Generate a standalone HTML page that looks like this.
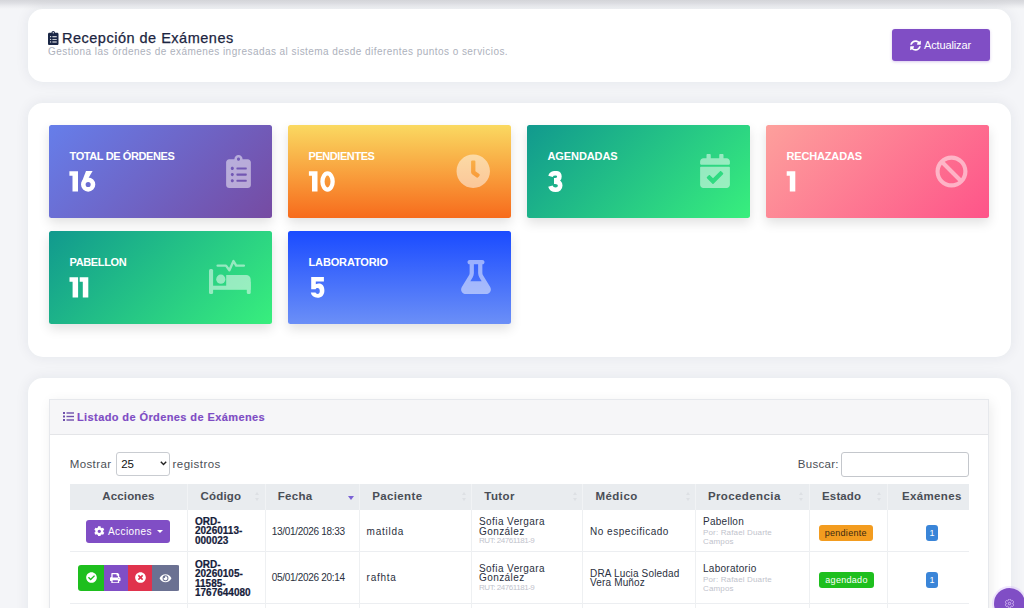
<!DOCTYPE html>
<html><head><meta charset="utf-8">
<style>
*{box-sizing:border-box;margin:0;padding:0}
html,body{width:1024px;height:608px;overflow:hidden}
body{background:#f4f5f8;font-family:"Liberation Sans",sans-serif;position:relative;color:#1f2a44}
.abs{position:absolute}
.topstrip{left:0;top:0;width:1024px;height:10px;background:linear-gradient(#d5d6da 0,#dedfe3 3px,#ebecef 6px,#f4f5f7 9px)}
.panel{position:absolute;background:#fff;border-radius:15px;box-shadow:0 0 14px rgba(30,40,70,.075)}
.t{position:absolute;white-space:nowrap;line-height:1}
.card{position:absolute;width:222.7px;height:93px;border-radius:2.5px;box-shadow:0 5px 12px rgba(0,0,0,.12)}
.card .lbl{position:absolute;left:20.5px;top:26px;font-size:11px;line-height:1;font-weight:700;color:#fff;letter-spacing:-.39px;white-space:nowrap}
.card .num{position:absolute;left:20px;top:43.5px;font-size:28px;line-height:1;font-weight:700;color:#fff;transform:scaleX(.86);transform-origin:left;letter-spacing:-.3px;-webkit-text-stroke:.6px #fff}
.card svg{position:absolute;opacity:.5}
.card svg.numsvg{opacity:1}
.th{position:absolute;top:491px;font-size:11.5px;line-height:1;font-weight:700;color:#4a4e56;white-space:nowrap}
.cell{position:absolute;font-size:10px;line-height:1;color:#2a3040;white-space:nowrap}
.code{position:absolute;font-size:10px;line-height:9.6px;font-weight:700;color:#15203a;white-space:nowrap;-webkit-text-stroke:.2px #15203a}
.sm{font-size:8px;color:#bfc3cc}
.sort{position:absolute;top:492px;width:4px;height:9px}
.sort:before,.sort:after{content:"";position:absolute;left:0;border-left:2px solid transparent;border-right:2px solid transparent}
.sort:before{top:0;border-bottom:3px solid #dde0e4}
.sort:after{bottom:0;border-top:3px solid #dde0e4}
.badge{position:absolute;height:16px;border-radius:3px;font-size:9px;line-height:16px;text-align:center;white-space:nowrap}
</style></head><body>
<div class="abs topstrip"></div>

<!-- panel 1 -->
<div class="panel" style="left:28px;top:9px;width:983px;height:73px"></div>
<svg class="abs" style="left:48px;top:30.5px" width="10.5" height="14" viewBox="0 0 384 512"><path fill="#1b2746" d="M336 64h-80c0-35.3-28.7-64-64-64s-64 28.7-64 64H48C21.5 64 0 85.5 0 112v352c0 26.5 21.5 48 48 48h288c26.5 0 48-21.5 48-48V112c0-26.5-21.5-48-48-48zM96 424c-13.3 0-24-10.7-24-24s10.7-24 24-24 24 10.7 24 24-10.7 24-24 24zm0-96c-13.3 0-24-10.7-24-24s10.7-24 24-24 24 10.7 24 24-10.7 24-24 24zm0-96c-13.3 0-24-10.7-24-24s10.7-24 24-24 24 10.7 24 24-10.7 24-24 24zm96-192c13.3 0 24 10.7 24 24s-10.7 24-24 24-24-10.7-24-24 10.7-24 24-24zm128 368c0 4.4-3.6 8-8 8H168c-4.4 0-8-3.6-8-8v-16c0-4.4 3.6-8 8-8h144c4.4 0 8 3.6 8 8v16zm0-96c0 4.4-3.6 8-8 8H168c-4.4 0-8-3.6-8-8v-16c0-4.4 3.6-8 8-8h144c4.4 0 8 3.6 8 8v16zm0-96c0 4.4-3.6 8-8 8H168c-4.4 0-8-3.6-8-8v-16c0-4.4 3.6-8 8-8h144c4.4 0 8 3.6 8 8v16z"/></svg>
<div class="t" style="left:62px;top:30.6px;font-size:14.5px;color:#1c2541;letter-spacing:.5px;-webkit-text-stroke:.25px #1c2541">Recepción de Exámenes</div>
<div class="t" style="left:48px;top:47.3px;font-size:10px;color:#adb1bc;letter-spacing:.45px">Gestiona las órdenes de exámenes ingresadas al sistema desde diferentes puntos o servicios.</div>
<div class="abs" style="left:892px;top:29px;width:98px;height:31.5px;background:#804ec5;border-radius:3px;box-shadow:0 1px 3px rgba(125,77,195,.3)"></div>
<svg class="abs" style="left:910px;top:39.5px" width="11" height="11" viewBox="0 0 512 512"><path fill="#fff" d="M370.7 133.3C339.5 104 298.9 88 255.8 88c-77.5.1-144.3 53.2-162.8 126.9-1.3 5.4-6.1 9.2-11.7 9.2H24.1c-7.5 0-13.2-6.8-11.8-14.2C33.9 94.9 134.8 8 256 8c66.4 0 126.8 26.1 171.3 68.7L463 41c15.1-15.1 41-4.4 41 17v134c0 13.3-10.7 24-24 24H346c-21.4 0-32.1-25.9-17-41l41.7-41.7zM32 296h134c21.4 0 32.1 25.9 17 41l-41.8 41.8c31.3 29.3 71.8 45.3 114.9 45.3 77.4-.1 144.3-53.1 162.8-126.8 1.3-5.4 6.1-9.2 11.7-9.2h57.3c7.5 0 13.2 6.8 11.8 14.2C478.1 417.1 377.2 504 256 504c-66.4 0-126.8-26.1-171.3-68.7L49 471c-15.1 15.1-41 4.4-41-17V320c0-13.3 10.7-24 24-24z"/></svg>
<div class="t" style="left:924px;top:40px;font-size:11px;color:#fff;letter-spacing:-.13px">Actualizar</div>

<!-- panel 2 -->
<div class="panel" style="left:28px;top:103px;width:983px;height:254px"></div>

<div class="card" style="left:49px;top:125px;background:linear-gradient(135deg,#667eea 0%,#764ba2 100%)">
  <div class="lbl">TOTAL DE ÓRDENES</div><svg class="numsvg" style="left:0;top:46.2px" width="60" height="22" viewBox="0 0 60 22"><g fill="#fff"><path transform="translate(20.4,0.2)" d="M0 0.1H8.6V20.3H3.1V4.6H0Z"/><g transform="translate(32,0)"><circle cx="7.15" cy="13.55" r="4.85" fill="none" stroke="#fff" stroke-width="4.6"/><path d="M5.0 0H11.6L6.9 7.9L0.6 11.6Z"/></g></g></svg>
  <svg style="left:177px;top:30px" width="25" height="33" viewBox="0 0 384 512"><path fill="#fff" d="M336 64h-80c0-35.3-28.7-64-64-64s-64 28.7-64 64H48C21.5 64 0 85.5 0 112v352c0 26.5 21.5 48 48 48h288c26.5 0 48-21.5 48-48V112c0-26.5-21.5-48-48-48zM96 424c-13.3 0-24-10.7-24-24s10.7-24 24-24 24 10.7 24 24-10.7 24-24 24zm0-96c-13.3 0-24-10.7-24-24s10.7-24 24-24 24 10.7 24 24-10.7 24-24 24zm0-96c-13.3 0-24-10.7-24-24s10.7-24 24-24 24 10.7 24 24-10.7 24-24 24zm96-192c13.3 0 24 10.7 24 24s-10.7 24-24 24-24-10.7-24-24 10.7-24 24-24zm128 368c0 4.4-3.6 8-8 8H168c-4.4 0-8-3.6-8-8v-16c0-4.4 3.6-8 8-8h144c4.4 0 8 3.6 8 8v16zm0-96c0 4.4-3.6 8-8 8H168c-4.4 0-8-3.6-8-8v-16c0-4.4 3.6-8 8-8h144c4.4 0 8 3.6 8 8v16zm0-96c0 4.4-3.6 8-8 8H168c-4.4 0-8-3.6-8-8v-16c0-4.4 3.6-8 8-8h144c4.4 0 8 3.6 8 8v16z"/></svg>
</div>
<div class="card" style="left:288px;top:125px;background:linear-gradient(to bottom,#fad961 0%,#f76b1c 100%)">
  <div class="lbl" style="letter-spacing:-0.43px">PENDIENTES</div><svg class="numsvg" style="left:0;top:46.2px" width="60" height="22" viewBox="0 0 60 22"><g fill="#fff"><path transform="translate(20.9,0.2)" d="M0 0.1H8.6V20.3H3.1V4.6H0Z"/><g transform="translate(32.3,0.3)"><ellipse cx="7.25" cy="10.2" rx="5.1" ry="8.05" fill="none" stroke="#fff" stroke-width="4.3"/></g></g></svg>
  <svg style="left:168.3px;top:29.3px" width="34.5" height="34.5" viewBox="0 0 512 512"><path fill="#fff" d="M256,8C119,8,8,119,8,256S119,504,256,504,504,393,504,256,393,8,256,8Zm92.49,313h0l-20,25a16,16,0,0,1-22.49,2.5h0l-67-49.72a40,40,0,0,1-15-31.23V112a16,16,0,0,1,16-16h32a16,16,0,0,1,16,16V256l58,42.5A16,16,0,0,1,348.49,321Z"/></svg>
</div>
<div class="card" style="left:527px;top:125px;background:linear-gradient(135deg,#11998e 0%,#38ef7d 100%)">
  <div class="lbl" style="letter-spacing:-0.1px">AGENDADAS</div><svg class="numsvg" style="left:0;top:45.9px" width="60" height="22" viewBox="0 0 60 22"><g fill="#fff"><g transform="translate(21.6,0)"><path d="M1.9 5.3C2.6 2.9 4.5 2.2 7.0 2.2C9.6 2.2 10.8 3.6 10.8 5.6C10.8 8.0 9.2 9.4 6.3 9.4H5.4M5.4 10.7H6.6C9.7 10.7 11.6 12.0 11.6 14.6C11.6 17.3 9.6 18.8 7.0 18.8C4.2 18.8 2.5 17.6 1.8 15.2" fill="none" stroke="#fff" stroke-width="4.6"/></g></g></svg>
  <svg style="left:173px;top:29px" width="30" height="34" viewBox="0 0 448 512"><path fill="#fff" d="M436 160H12c-6.627 0-12-5.373-12-12v-36c0-26.51 21.49-48 48-48h48V12c0-6.627 5.373-12 12-12h40c6.627 0 12 5.373 12 12v52h128V12c0-6.627 5.373-12 12-12h40c6.627 0 12 5.373 12 12v52h48c26.51 0 48 21.490 48 48v36c0 6.627-5.373 12-12 12zM12 192h424c6.627 0 12 5.373 12 12v260c0 26.51-21.49 48-48 48H48c-26.51 0-48-21.49-48-48V204c0-6.627 5.373-12 12-12zm333.296 95.947l-28.169-28.398c-4.667-4.705-12.265-4.736-16.970-.068L194.12 364.665l-45.98-46.352c-4.667-4.705-12.266-4.736-16.971-.068l-28.397 28.17c-4.705 4.667-4.736 12.265-.068 16.97l82.601 83.269c4.667 4.705 12.265 4.736 16.97.068l142.953-141.805c4.705-4.667 4.736-12.265.068-16.97z"/></svg>
</div>
<div class="card" style="left:766px;top:125px;background:linear-gradient(135deg,#fda09c 0%,#fe5489 100%)">
  <div class="lbl" style="letter-spacing:-0.16px">RECHAZADAS</div><svg class="numsvg" style="left:0;top:46.2px" width="60" height="22" viewBox="0 0 60 22"><g fill="#fff"><path transform="translate(20.7,0.2)" d="M0 0.1H8.6V20.3H3.1V4.6H0Z"/></g></svg>
  <svg style="left:169px;top:30px" width="33" height="33" viewBox="0 0 512 512"><path fill="#fff" d="M256 8C119.034 8 8 119.033 8 256s111.034 248 248 248 248-111.034 248-248S392.967 8 256 8zm130.108 117.892c65.448 65.448 70 165.481 20.677 235.637L150.47 105.216c70.204-49.356 170.226-44.735 235.638 20.676zM125.892 386.108c-65.448-65.448-70-165.481-20.677-235.637L361.53 406.784c-70.203 49.356-170.226 44.736-235.638-20.676z"/></svg>
</div>
<div class="card" style="left:49px;top:231px;background:linear-gradient(135deg,#11998e 0%,#38ef7d 100%)">
  <div class="lbl" style="letter-spacing:-0.36px">PABELLON</div><svg class="numsvg" style="left:0;top:46.3px" width="60" height="22" viewBox="0 0 60 22"><g fill="#fff"><path transform="translate(20.5,0.2)" d="M0 0.1H8.6V20.3H3.1V4.6H0Z"/><path transform="translate(30.7,0.2)" d="M0 0.1H8.6V20.3H3.1V4.6H0Z"/></g></svg>
  <svg style="left:158px;top:27px" width="46" height="38" viewBox="158 27 46 38"><g fill="#fff"><rect x="160" y="38" width="4.1" height="25" rx="1.5"/><rect x="160" y="54.7" width="41.7" height="4.1"/><rect x="197.8" y="50" width="3.9" height="12.9" rx="1.5"/><circle cx="171.8" cy="48.2" r="4.6"/><path d="M177.2 43.9H197.2A4.5 4.5 0 0 1 201.7 48.4V55.2H177.2Z"/></g><path d="M168.6 34.6H177L180.4 39.2L184.5 30L187.2 34.6H194.9" fill="none" stroke="#fff" stroke-width="2.4" stroke-linejoin="round" stroke-linecap="round"/></svg>
</div>
<div class="card" style="left:288px;top:231px;background:linear-gradient(to bottom,#1a4bff 0%,#6b8ff7 100%)">
  <div class="lbl" style="letter-spacing:-0.14px">LABORATORIO</div><svg class="numsvg" style="left:0;top:45.9px" width="60" height="22" viewBox="0 0 60 22"><g fill="#fff"><g transform="translate(22.6,0)"><path d="M0.6 0H13.3V4.6H5.2V7.2C6.2 6.8 7.2 6.6 8.2 6.6C11.6 6.6 13.8 9.3 13.8 13.4C13.8 18.0 11.0 20.7 6.9 20.7C3.3 20.7 0.8 18.8 0.2 15.6H4.9C5.3 16.4 6.0 16.9 7.0 16.9C8.3 16.9 9.2 15.9 9.2 13.9C9.2 11.9 8.3 10.9 6.9 10.9C6.0 10.9 5.3 11.4 5.0 12.2H0.6Z"/></g></g></svg>
  <svg style="left:173px;top:29px" width="30" height="34" viewBox="0 0 448 512"><path fill="#fff" d="M288 0H160 128C110.3 0 96 14.3 96 32s14.3 32 32 32V196.8c0 11.8-3.3 23.5-9.5 33.5L10.3 406.2C3.6 417.2 0 429.7 0 442.6C0 480.9 31.1 512 69.4 512H378.6c38.3 0 69.4-31.1 69.4-69.4c0-12.8-3.6-25.4-10.3-36.4L329.5 230.4c-6.2-10.1-9.5-21.7-9.5-33.5V64c17.7 0 32-14.3 32-32s-14.3-32-32-32H288zM192 196.8V64h64V196.8c0 23.7 6.6 46.9 19 67.1L309.5 320h-171L173 263.9c12.4-20.2 19-43.4 19-67.1z"/></svg>
</div>

<!-- panel 3 -->
<div class="panel" style="left:28px;top:378px;width:983px;height:260px"></div>
<div class="abs" style="left:48.6px;top:398.8px;width:940.8px;height:230px;background:#fff;border:1px solid #e6e8ec;box-shadow:2px 3px 12px rgba(0,0,0,.08)"></div>
<div class="abs" style="left:49.6px;top:399.8px;width:938.8px;height:35.2px;background:#f6f6f8;border-bottom:1px solid #e4e5e8"></div>
<svg class="abs" style="left:63px;top:412px" width="11" height="9" viewBox="0 0 11 9"><g fill="#7050ac"><rect x="0" y="0" width="2" height="2"/><rect x="0" y="3.5" width="2" height="2"/><rect x="0" y="7" width="2" height="2"/><rect x="3.5" y="0.3" width="7.5" height="1.4"/><rect x="3.5" y="3.8" width="7.5" height="1.4"/><rect x="3.5" y="7.3" width="7.5" height="1.4"/></g></svg>
<div class="t" style="left:77px;top:411.5px;font-size:11px;font-weight:700;color:#7e4cc4;letter-spacing:.4px;-webkit-text-stroke:.15px #7e4cc4">Listado de Órdenes de Exámenes</div>

<div class="t" style="left:69.7px;top:458.7px;font-size:11.5px;color:#4b4f56;letter-spacing:.4px">Mostrar</div>
<div class="abs" style="left:115.5px;top:451.5px;width:54.5px;height:24px;border:1px solid #c9ccd1;border-radius:3px;background:#fff"></div>
<div class="t" style="left:121.2px;top:458.7px;font-size:11.5px;color:#111">25</div>
<svg class="abs" style="left:160px;top:461px" width="7" height="5" viewBox="0 0 7 5"><path d="M0.8 0.8L3.5 3.6L6.2 0.8" fill="none" stroke="#222" stroke-width="1.4"/></svg>
<div class="t" style="left:172.5px;top:458.7px;font-size:11.5px;color:#4b4f56;letter-spacing:.47px">registros</div>
<div class="t" style="left:797.8px;top:458.7px;font-size:11.5px;color:#4b4f56;letter-spacing:.29px">Buscar:</div>
<div class="abs" style="left:840.5px;top:452px;width:128.5px;height:25px;border:1px solid #c4c7cc;border-radius:3px;background:#fff"></div>

<!-- table header -->
<div class="abs" style="left:70px;top:484px;width:899px;height:25.5px;background:#e9ecef"></div>
<div class="abs" style="left:186.5px;top:484px;width:1px;height:25.5px;background:#f1f3f5"></div>
<div class="abs" style="left:264.5px;top:484px;width:1px;height:25.5px;background:#f1f3f5"></div>
<div class="abs" style="left:358.5px;top:484px;width:1px;height:25.5px;background:#f1f3f5"></div>
<div class="abs" style="left:471px;top:484px;width:1px;height:25.5px;background:#f1f3f5"></div>
<div class="abs" style="left:582px;top:484px;width:1px;height:25.5px;background:#f1f3f5"></div>
<div class="abs" style="left:694.8px;top:484px;width:1px;height:25.5px;background:#f1f3f5"></div>
<div class="abs" style="left:809px;top:484px;width:1px;height:25.5px;background:#f1f3f5"></div>
<div class="abs" style="left:886.5px;top:484px;width:1px;height:25.5px;background:#f1f3f5"></div>

<div class="th" style="left:102.2px;letter-spacing:.17px">Acciones</div>
<div class="th" style="left:200.4px;letter-spacing:.23px">Código</div>
<div class="th" style="left:277.8px;letter-spacing:.29px">Fecha</div>
<div class="th" style="left:372.2px;letter-spacing:.37px">Paciente</div>
<div class="th" style="left:484.3px;letter-spacing:.43px">Tutor</div>
<div class="th" style="left:595.4px;letter-spacing:.46px">Médico</div>
<div class="th" style="left:707.9px;letter-spacing:.4px">Procedencia</div>
<div class="th" style="left:822.1px;letter-spacing:.11px">Estado</div>
<div class="th" style="left:902px;letter-spacing:.35px">Exámenes</div>
<div class="sort" style="left:255px"></div>
<div class="sort" style="left:462px"></div>
<div class="sort" style="left:573px"></div>
<div class="sort" style="left:686px"></div>
<div class="sort" style="left:799px"></div>
<div class="sort" style="left:877px"></div>
<div class="abs" style="left:347.5px;top:496px;width:0;height:0;border-left:3.5px solid transparent;border-right:3.5px solid transparent;border-top:4px solid #7b62d6"></div>

<!-- table body lines -->
<div class="abs" style="left:70px;top:551px;width:899px;height:1px;background:#eceef1"></div>
<div class="abs" style="left:70px;top:603px;width:899px;height:1px;background:#eceef1"></div>
<div class="abs" style="left:186.5px;top:509.5px;width:1px;height:100px;background:#eef0f2"></div>
<div class="abs" style="left:264.5px;top:509.5px;width:1px;height:100px;background:#eef0f2"></div>
<div class="abs" style="left:358.5px;top:509.5px;width:1px;height:100px;background:#eef0f2"></div>
<div class="abs" style="left:471px;top:509.5px;width:1px;height:100px;background:#eef0f2"></div>
<div class="abs" style="left:582px;top:509.5px;width:1px;height:100px;background:#eef0f2"></div>
<div class="abs" style="left:694.8px;top:509.5px;width:1px;height:100px;background:#eef0f2"></div>
<div class="abs" style="left:809px;top:509.5px;width:1px;height:100px;background:#eef0f2"></div>
<div class="abs" style="left:886.5px;top:509.5px;width:1px;height:100px;background:#eef0f2"></div>

<!-- row 1 -->
<div class="abs" style="left:86px;top:520px;width:84px;height:23px;background:#804ec5;border-radius:3px"></div>
<svg class="abs" style="left:94.3px;top:525.8px" width="10.6" height="10.6" viewBox="0 0 512 512"><path fill="#fff" d="M487.4 315.7l-42.6-24.6c4.3-23.2 4.3-47 0-70.2l42.6-24.6c4.9-2.8 7.1-8.6 5.5-14-11.1-35.6-30-67.8-54.7-94.6-3.8-4.1-10-5.1-14.8-2.3L380.8 110c-17.9-15.4-38.5-27.3-60.8-35.1V25.8c0-5.6-3.9-10.5-9.4-11.7-36.7-8.2-74.3-7.8-109.2 0-5.5 1.2-9.4 6.1-9.4 11.7V75c-22.2 7.9-42.8 19.8-60.8 35.1L88.7 85.5c-4.9-2.8-11-1.9-14.8 2.3-24.7 26.7-43.6 58.9-54.7 94.6-1.7 5.4.6 11.2 5.5 14L67.3 221c-4.3 23.2-4.3 47 0 70.2l-42.6 24.6c-4.9 2.8-7.1 8.6-5.5 14 11.1 35.6 30 67.8 54.7 94.6 3.8 4.1 10 5.1 14.8 2.3l42.6-24.6c17.9 15.4 38.5 27.3 60.8 35.1v49.2c0 5.6 3.9 10.5 9.4 11.7 36.7 8.2 74.3 7.8 109.2 0 5.5-1.2 9.4-6.1 9.4-11.7v-49.2c22.2-7.9 42.8-19.8 60.8-35.1l42.6 24.6c4.9 2.8 11 1.9 14.8-2.3 24.7-26.7 43.6-58.9 54.7-94.6 1.5-5.5-.7-11.3-5.6-14.1zM256 336c-44.1 0-80-35.9-80-80s35.9-80 80-80 80 35.9 80 80-35.9 80-80 80z"/></svg>
<div class="t" style="left:108px;top:527px;font-size:10px;color:#fff;letter-spacing:.43px">Acciones</div>
<div class="abs" style="left:157.3px;top:530px;width:0;height:0;border-left:3px solid transparent;border-right:3px solid transparent;border-top:3.6px solid #fff"></div>

<div class="code" style="left:195px;top:516.5px">ORD-<br>20260113-<br>000023</div>
<div class="cell" style="left:271.7px;top:527px;letter-spacing:-.3px">13/01/2026 18:33</div>
<div class="cell" style="left:366.6px;top:527px;letter-spacing:.75px">matilda</div>
<div class="cell" style="left:479px;top:517px;letter-spacing:.42px;line-height:9.6px">Sofia Vergara<br>González</div>
<div class="cell sm" style="left:479px;top:537px;letter-spacing:-.45px;font-size:8px">RUT: 24761181-9</div>
<div class="cell" style="left:590px;top:527px;letter-spacing:.52px">No especificado</div>
<div class="cell" style="left:703px;top:516.5px;letter-spacing:.26px">Pabellon</div>
<div class="cell sm" style="left:703px;top:528px;letter-spacing:.15px;line-height:9.3px">Por: Rafael Duarte<br>Campos</div>
<div class="badge" style="left:819px;top:525px;width:53.5px;background:#f39c1f;color:#3b2a12;letter-spacing:.3px">pendiente</div>
<div class="badge" style="left:925.8px;top:525px;width:12.5px;background:#3a85d8;color:#fff">1</div>

<!-- row 2 -->
<div class="abs" style="left:78px;top:565px;width:101.5px;height:26px;border-radius:3px;overflow:hidden">
  <div class="abs" style="left:0;top:0;width:25.6px;height:26px;background:#1ebf1e"></div>
  <div class="abs" style="left:25.6px;top:0;width:24.3px;height:26px;background:#804ec5"></div>
  <div class="abs" style="left:49.9px;top:0;width:24.3px;height:26px;background:#e0334d"></div>
  <div class="abs" style="left:74.2px;top:0;width:27.3px;height:26px;background:#6b7192"></div>
</div>
<svg class="abs" style="left:85.5px;top:572px" width="11" height="11" viewBox="0 0 512 512"><path fill="#fff" d="M504 256c0 136.967-111.033 248-248 248S8 392.967 8 256 119.033 8 256 8s248 111.033 248 248zM227.314 387.314l184-184c6.248-6.248 6.248-16.379 0-22.627l-22.627-22.627c-6.248-6.249-16.379-6.249-22.628 0L216 308.118l-70.059-70.059c-6.248-6.248-16.379-6.248-22.628 0l-22.627 22.627c-6.248 6.248-6.248 16.379 0 22.627l104 104c6.249 6.249 16.379 6.249 22.628.001z"/></svg>
<svg class="abs" style="left:110px;top:572.5px" width="10.5" height="10.5" viewBox="0 0 512 512"><path fill="#fff" d="M448 192V77.25c0-8.49-3.37-16.62-9.37-22.63L393.37 9.37c-6-6-14.14-9.37-22.630-9.37H96C78.33 0 64 14.33 64 32v160c-35.35 0-64 28.65-64 64v112c0 8.84 7.16 16 16 16h48v96c0 17.67 14.33 32 32 32h320c17.67 0 32-14.33 32-32v-96h48c8.84 0 16-7.16 16-16V256c0-35.35-28.65-64-64-64zm-64 256H128v-96h256v96zm0-224H128V64h192v48c0 8.84 7.16 16 16 16h48v96zm48 72c-13.25 0-24-10.75-24-24 0-13.26 10.75-24 24-24s24 10.74 24 24c0 13.25-10.75 24-24 24z"/></svg>
<svg class="abs" style="left:134.5px;top:572px" width="11" height="11" viewBox="0 0 512 512"><path fill="#fff" d="M256 8C119 8 8 119 8 256s111 248 248 248 248-111 248-248S393 8 256 8zm121.6 313.1c4.7 4.7 4.7 12.3 0 17L338 377.6c-4.7 4.7-12.3 4.7-17 0L256 312l-65.1 65.6c-4.7 4.7-12.3 4.7-17 0L134.4 338c-4.7-4.7-4.7-12.3 0-17l65.6-65-65.6-65.1c-4.7-4.7-4.7-12.3 0-17l39.6-39.6c4.7-4.7 12.3-4.7 17 0l65 65.7 65.1-65.6c4.7-4.7 12.3-4.7 17 0l39.6 39.6c4.7 4.7 4.7 12.3 0 17L312 256l65.6 65.1z"/></svg>
<svg class="abs" style="left:159px;top:572.5px" width="13" height="10.5" viewBox="0 0 576 512"><path fill="#fff" d="M572.52 241.4C518.29 135.59 410.93 64 288 64S57.68 135.64 3.48 241.41a32.35 32.35 0 0 0 0 29.19C57.71 376.41 165.07 448 288 448s230.32-71.64 284.52-177.41a32.35 32.35 0 0 0 0-29.19zM288 400a144 144 0 1 1 144-144 143.93 143.93 0 0 1-144 144zm0-240a95.31 95.31 0 0 0-25.31 3.79 47.85 47.85 0 0 1-66.9 66.9A95.78 95.78 0 1 0 288 160z"/></svg>

<div class="code" style="left:195px;top:559.5px">ORD-<br>20260105-<br>11585-<br>1767644080</div>
<div class="cell" style="left:271.7px;top:572.5px;letter-spacing:-.3px">05/01/2026 20:14</div>
<div class="cell" style="left:366.6px;top:572.5px;letter-spacing:.75px">rafhta</div>
<div class="cell" style="left:479px;top:563.5px;letter-spacing:.42px;line-height:9.6px">Sofia Vergara<br>González</div>
<div class="cell sm" style="left:479px;top:583.5px;letter-spacing:-.45px;font-size:8px">RUT: 24761181-9</div>
<div class="cell" style="left:590px;top:568.5px;letter-spacing:.16px;line-height:9.6px">DRA Lucia Soledad<br>Vera Muñoz</div>
<div class="cell" style="left:703px;top:563.5px;letter-spacing:.26px">Laboratorio</div>
<div class="cell sm" style="left:703px;top:575px;letter-spacing:.15px;line-height:9.3px">Por: Rafael Duarte<br>Campos</div>
<div class="badge" style="left:819px;top:571.5px;width:55px;background:#1ebf1e;color:#fff;letter-spacing:.3px">agendado</div>
<div class="badge" style="left:925.8px;top:571.5px;width:12.5px;background:#3a85d8;color:#fff">1</div>

<!-- floating button -->
<div class="abs" style="left:994px;top:588px;width:31px;height:31px;border-radius:50%;background:#804ec5;box-shadow:0 0 0 2px rgba(200,160,255,.25)"></div>
<svg class="abs" style="left:1005px;top:598.5px" width="9" height="9" viewBox="0 0 512 512"><path fill="none" stroke="#d9bff7" stroke-width="50" d="M487.4 315.7l-42.6-24.6c4.3-23.2 4.3-47 0-70.2l42.6-24.6c4.9-2.8 7.1-8.6 5.5-14-11.1-35.6-30-67.8-54.7-94.6-3.8-4.1-10-5.1-14.8-2.3L380.8 110c-17.9-15.4-38.5-27.3-60.8-35.1V25.8c0-5.6-3.9-10.5-9.4-11.7-36.7-8.2-74.3-7.8-109.2 0-5.5 1.2-9.4 6.1-9.4 11.7V75c-22.2 7.9-42.8 19.8-60.8 35.1L88.7 85.5c-4.9-2.8-11-1.9-14.8 2.3-24.7 26.7-43.6 58.9-54.7 94.6-1.7 5.4.6 11.2 5.5 14L67.3 221c-4.3 23.2-4.3 47 0 70.2l-42.6 24.6c-4.9 2.8-7.1 8.6-5.5 14 11.1 35.6 30 67.8 54.7 94.6 3.8 4.1 10 5.1 14.8 2.3l42.6-24.6c17.9 15.4 38.5 27.3 60.8 35.1v49.2c0 5.6 3.9 10.5 9.4 11.7 36.7 8.2 74.3 7.8 109.2 0 5.5-1.2 9.4-6.1 9.4-11.7v-49.2c22.2-7.9 42.8-19.8 60.8-35.1l42.6 24.6c4.9 2.8 11 1.900 14.8-2.3 24.7-26.7 43.6-58.9 54.7-94.6 1.5-5.5-.7-11.3-5.6-14.1z"/><circle cx="256" cy="256" r="70" fill="none" stroke="#d9bff7" stroke-width="50"/></svg>
</body></html>
